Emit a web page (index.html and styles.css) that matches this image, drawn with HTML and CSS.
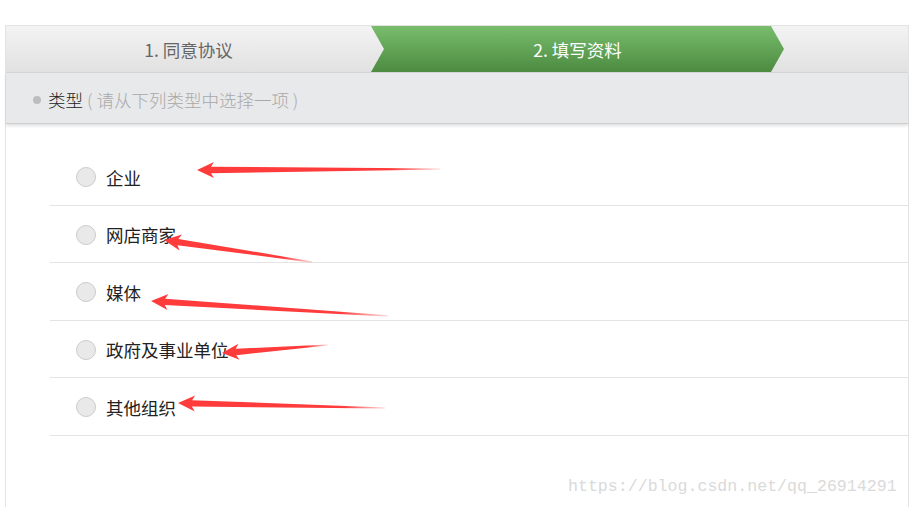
FILE: index.html
```html
<!DOCTYPE html>
<html lang="zh-CN">

<head>
    <meta charset="UTF-8">
    <meta name="viewport" content="width=device-width, initial-scale=1.0">
    <title>填写资料</title>
    <link rel="stylesheet" href="styles.css">
</head>

<body>
    <div class="wizard">
        <div class="steps">
            <div class="step step-done">1. 同意协议</div>
            <div class="step step-active">2. 填写资料</div>
        </div>
        <div class="section-title">
            <span class="dot"></span>
            <span class="label">类型</span>
            <span class="hint">( 请从下列类型中选择一项 )</span>
        </div>
        <ul class="type-list">
            <li class="type-item"><span class="radio"></span>企业</li>
            <li class="type-item"><span class="radio"></span>网店商家</li>
            <li class="type-item"><span class="radio"></span>媒体</li>
            <li class="type-item"><span class="radio"></span>政府及事业单位</li>
            <li class="type-item"><span class="radio"></span>其他组织</li>
        </ul>
    </div>

    <svg class="marks" width="909" height="507" viewBox="0 0 909 507">
        <defs>
            <linearGradient id="fade" x1="0" y1="0" x2="1" y2="0">
                <stop offset="0" stop-color="#ff3b3b" />
                <stop offset="0.8" stop-color="#ff3b3b" />
                <stop offset="1" stop-color="#ff3b3b" stop-opacity="0.2" />
            </linearGradient>
        </defs>
        <polygon transform="translate(197 170) rotate(-0.24)" points="0,0 17,-8 14,-3.2 243,-0.6 243,0.6 14,3.2 17,8" fill="url(#fade)" />
        <polygon transform="translate(164 240) rotate(8.45)" points="0,0 17,-8 14,-3.2 150,-0.6 150,0.6 14,3.2 17,8" fill="url(#fade)" />
        <polygon transform="translate(151 301) rotate(3.62)" points="0,0 17,-8 14,-3.2 237,-0.6 237,0.6 14,3.2 17,8" fill="url(#fade)" />
        <polygon transform="translate(222 353) rotate(-4.32)" points="0,0 17,-8 14,-3.2 106,-0.6 106,0.6 14,3.2 17,8" fill="url(#fade)" />
        <polygon transform="translate(178 403) rotate(1.38)" points="0,0 17,-8 14,-3.2 207,-0.6 207,0.6 14,3.2 17,8" fill="url(#fade)" />
    </svg>

    <div class="watermark">https://blog.csdn.net/qq_26914291</div>
</body>

</html>
```

FILE: styles.css
```css
html * {
    padding: 0;
    margin: 0;
    border: 0;
    box-sizing: border-box;
}

body {
    position: relative;
    height: 507px;
    overflow: hidden;
    padding: 25px 0 0 5px;
    font-family: "Microsoft YaHei", "Noto Sans CJK SC", sans-serif;
    color: #333;
    background: #fff;
}

.wizard {
    width: 904px;
    height: 482px;
    border: 1px solid #e3e3e3;
    border-bottom: 0;
}

.steps {
    display: flex;
    height: 47px;
    background: linear-gradient(#f3f3f3, #e1e1e1);
    border-bottom: 1px solid #d6d6d6;
}

.step {
    display: flex;
    align-items: center;
    justify-content: center;
    font-size: 17.5px;
    height: 46px;
}

.step-done {
    width: 365px;
    color: #666;
}

.step-active {
    width: 413px;
    color: #fff;
    background: linear-gradient(#79bd6d, #4c8b41);
    clip-path: polygon(0 0, 400px 0, 100% 50%, 400px 100%, 0 100%, 13px 50%);
}

.section-title {
    display: flex;
    align-items: center;
    height: 51px;
    padding-left: 27px;
    padding-top: 3px;
    font-size: 17.5px;
    background: #e8e9eb;
    border-bottom: 1px solid #cdcdcd;
    box-shadow: 0 2px 3px rgba(0, 0, 0, .12);
}

.dot {
    width: 8px;
    height: 8px;
    border-radius: 50%;
    background: #bdbdbd;
    margin-right: 7px;
}

.label {
    color: #222;
    font-weight: 300;
}

.hint {
    color: #a8a8a8;
    margin-left: 4px;
    font-weight: 300;
}

.type-list {
    list-style: none;
    margin: 24px 0 0 44px;
}

.type-item {
    display: flex;
    align-items: center;
    height: 57.5px;
    padding: 2px 0 0 26px;
    font-size: 17.5px;
    color: #222;
    border-bottom: 1px solid #e4e4e4;
}

.radio {
    width: 20px;
    height: 20px;
    border-radius: 50%;
    background: #e9e9e9;
    border: 1px solid #cbcbcb;
    margin-right: 10px;
}

.marks {
    position: absolute;
    left: 0;
    top: 0;
    pointer-events: none;
}

.watermark {
    position: absolute;
    left: 568px;
    top: 477px;
    font-family: "Liberation Mono", monospace;
    font-size: 16.6px;
    color: #dadada;
}
```
